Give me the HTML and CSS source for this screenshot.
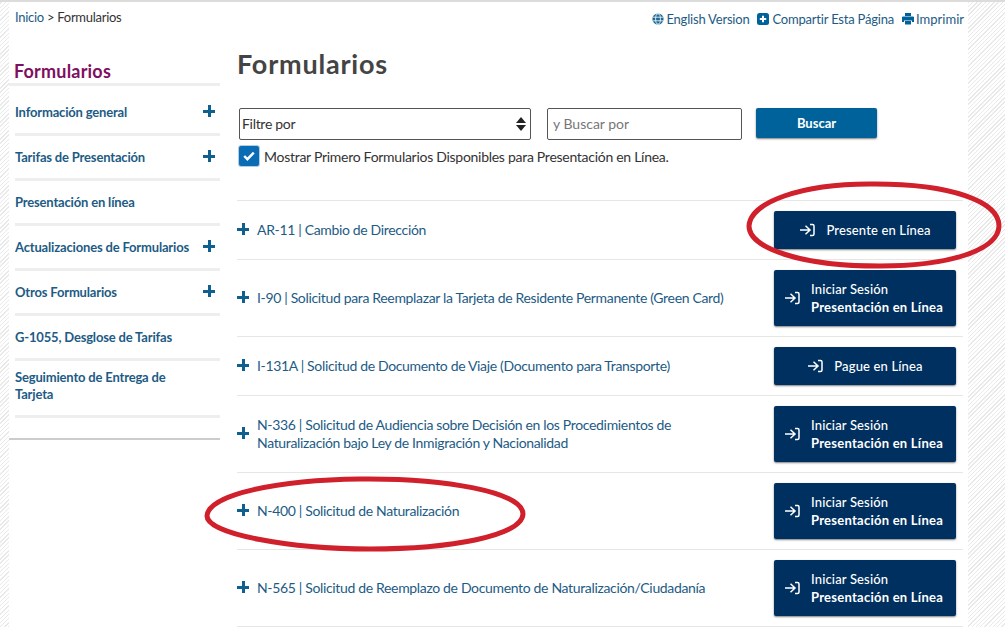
FILE: index.html
```html
<!DOCTYPE html>
<html lang="es">
<head>
  <meta charset="UTF-8" />
  <meta name="viewport" content="width=device-width, initial-scale=1.0"/>
  <title>Formularios</title>
  <link rel="stylesheet" href="styles.css">
</head>
<body>

  <div class="page">
    <div class="topbar">
      <div class="crumbs"><a href="#">Inicio</a> &gt; Formularios</div>
      <div class="tools">
        <a href="#">
          <svg class="tool-icon" viewBox="0 0 12 12"><circle cx="6" cy="6" r="5.600" fill="#1b6a97"/><ellipse cx="6" cy="6" rx="2.400" ry="5.200" fill="none" stroke="#fff" stroke-width=".8"/><path d="M1 4.200h10M1 7.800h10" stroke="#fff" stroke-width=".8"/></svg>
          English Version
        </a>
        <a class="share" href="#">
          <svg class="tool-icon" viewBox="0 0 12 12"><rect width="12" height="12" rx="2.500" fill="#00629b"/><path d="M6 2.800v6.400M2.800 6h6.400" stroke="#fff" stroke-width="2"/></svg>
          Compartir Esta Página
        </a>
        <a class="print" href="#">
          <svg class="tool-icon" viewBox="0 0 12 12"><path d="M3 0h6v3H3z" fill="#00629b"/><path d="M1 3.600h10a1 1 0 0 1 1 1V9H10V7.400H2V9H0V4.600a1 1 0 0 1 1-1z" fill="#00629b"/><path d="M3 8h6v3.500H3z" fill="#00629b"/></svg>
          Imprimir
        </a>
      </div>
    </div>

    <div class="layout">
      <aside class="sidebar">
        <h2>Formularios</h2>
        <ul>
          <li><a href="#">Información general</a><span class="plus"></span></li>
          <li><a href="#">Tarifas de Presentación</a><span class="plus"></span></li>
          <li><a href="#">Presentación en línea</a></li>
          <li><a href="#">Actualizaciones de Formularios</a><span class="plus"></span></li>
          <li><a href="#">Otros Formularios</a><span class="plus"></span></li>
          <li><a href="#">G-1055, Desglose de Tarifas</a></li>
          <li class="tall"><a href="#">Seguimiento de Entrega de Tarjeta</a></li>
        </ul>
        <div class="side-end"></div>
      </aside>

      <main class="content">
        <h1>Formularios</h1>

        <div class="filters">
          <div class="select-wrap">
            <select><option>Filtre por</option></select>
            <span class="updown"></span>
          </div>
          <input type="text" placeholder="y Buscar por">
          <button class="search-btn">Buscar</button>
        </div>

        <label class="check">
          <span class="box"><svg viewBox="0 0 12 10" width="12" height="10"><path d="M1.200 5l3.200 3.200 6.400-6.600" fill="none" stroke="#fff" stroke-width="2.400"/></svg></span>
          Mostrar Primero Formularios Disponibles para Presentación en Línea.
        </label>

        <div class="rows" id="rows"></div>
      </main>
    </div>
  </div>

  <svg class="marks" viewBox="0 0 1005 627" width="1005" height="627">
    <path d="M875 184C800 183 750 203 749 226C749 248 800 266 880 266C950 266 998 250 999 226C999 201 950 184 875 184Z"/>
    <path d="M360 479C280 480 208 494 207 516C207 534 290 549 370 549C450 549 522 536 523 514C523 492 445 478 360 479Z"/>
  </svg>

  <script>
    const rows = [
      { code: 'AR-11', name: 'Cambio de Dirección', btn: ['Presente en Línea'] },
      { code: 'I-90', name: 'Solicitud para Reemplazar la Tarjeta de Residente Permanente (Green Card)', btn: ['Iniciar Sesión', 'Presentación en Línea'] },
      { code: 'I-131A', name: 'Solicitud de Documento de Viaje (Documento para Transporte)', btn: ['Pague en Línea'] },
      { code: 'N-336', name: 'Solicitud de Audiencia sobre Decisión en los Procedimientos de Naturalización bajo Ley de Inmigración y Nacionalidad', btn: ['Iniciar Sesión', 'Presentación en Línea'] },
      { code: 'N-400', name: 'Solicitud de Naturalización', btn: ['Iniciar Sesión', 'Presentación en Línea'] },
      { code: 'N-565', name: 'Solicitud de Reemplazo de Documento de Naturalización/Ciudadanía', btn: ['Iniciar Sesión', 'Presentación en Línea'] }
    ];

    const arrow = '<svg class="arrow" viewBox="0 0 16 14" width="16" height="14"><path d="M1 7h9M6.500 2.800L11 7l-4.500 4.200M11 1.500h2.500q1.500 0 1.500 1.500v8q0 1.500-1.500 1.500H11" fill="none" stroke="#fff" stroke-width="1.500"/></svg>';

    const container = document.getElementById('rows');
    rows.forEach(row => {
      const div = document.createElement('div');
      div.className = 'row';
      let label = `<span>${row.btn[0]}</span>`;
      if (row.btn.length > 1) {
        label = `<span class="two"><span>${row.btn[0]}</span><b>${row.btn[1]}</b></span>`;
      }
      div.innerHTML = `
        <span class="plus"></span>
        <a class="row-name" href="#">${row.code} | ${row.name}</a>
        <a class="file-btn${row.btn.length > 1 ? ' double' : ''}" href="#">${arrow}${label}</a>
      `;
      container.appendChild(div);
    });
  </script>

</body>
</html>
```

FILE: styles.css
```css
html, body {
  margin: 0;
  height: 627px;
  overflow: hidden;
}
body {
  position: relative;
  font-family: "Lato", sans-serif;
  font-size: 14px;
  color: #333;
  border-top: 2px solid #dcdcdc;
  box-sizing: border-box;
  background: repeating-linear-gradient(135deg, #ffffff 0, #ffffff 2px, #e9e9e9 2px, #e9e9e9 3px);
}
a {
  color: #1d5b85;
  text-decoration: none;
}
.page {
  margin-left: 9px;
  width: 959px;
  height: 625px;
  background: #fff;
}
.topbar {
  display: flex;
  justify-content: space-between;
  padding: 8px 4px 0 6px;
  height: 27px;
}
.crumbs {
  font-size: 13px;
  line-height: 14px;
  letter-spacing: -0.28px;
}
.tools {
  display: flex;
  gap: 8px;
  font-size: 13px;
  line-height: 18px;
  letter-spacing: -0.2px;
}
.tools a {
  display: flex;
  align-items: center;
  gap: 2px;
  height: 18px;
}
.tools a.share {
  gap: 3px;
}
.tools a.print {
  letter-spacing: 0;
}
.tool-icon {
  width: 12px;
  height: 12px;
}
.layout {
  display: flex;
}
.sidebar {
  width: 211px;
  flex: none;
  margin-right: 17px;
}
.sidebar h2 {
  margin: 0;
  padding: 22px 0 0 5px;
  height: 24px;
  font-size: 18px;
  line-height: 24px;
  letter-spacing: 0.2px;
  color: #7f0f5f;
  border-bottom: 3px solid #eeeeee;
}
.sidebar ul {
  list-style: none;
  margin: 0 0 0 6px;
  padding: 0;
}
.sidebar li {
  display: flex;
  justify-content: space-between;
  align-items: center;
  height: 42px;
  padding-right: 5px;
  border-bottom: 3px solid #eeeeee;
  font-size: 13px;
  font-weight: bold;
  line-height: 17px;
  letter-spacing: -0.17px;
}
.sidebar li:first-child {
  padding-top: 5px;
}
.sidebar li.tall {
  height: 50px;
  padding-right: 35px;
  padding-bottom: 4px;
}
.side-end {
  margin-top: 20px;
  border-bottom: 2px solid #cccccc;
}
.plus {
  flex: none;
  width: 12px;
  height: 12px;
  margin-top: -2px;
  background:
    linear-gradient(#0f5f8f, #0f5f8f) center / 12px 3px no-repeat,
    linear-gradient(#0f5f8f, #0f5f8f) center / 3px 12px no-repeat;
}
.content {
  flex: 1;
  padding-right: 5px;
}
h1 {
  margin: 0;
  padding-top: 11px;
  height: 43px;
  font-size: 27px;
  line-height: 32px;
  letter-spacing: 0.8px;
  color: #444;
}
.filters {
  display: flex;
  align-items: flex-start;
  margin: 17px 0 0 2px;
}
.select-wrap {
  position: relative;
  width: 292px;
  margin-right: 16px;
}
.select-wrap select {
  appearance: none;
  width: 100%;
  height: 32px;
  padding: 0 2px 2px;
  border: 1px solid #555;
  border-radius: 2px;
  background: #fff;
  font: 14px "Lato", sans-serif;
  letter-spacing: -0.3px;
  color: #333;
}
.updown {
  position: absolute;
  right: 5px;
  top: 9px;
  width: 0;
  border-left: 5px solid transparent;
  border-right: 5px solid transparent;
  border-bottom: 6px solid #222;
}
.updown::after {
  content: "";
  position: absolute;
  left: -5px;
  top: 8px;
  border-left: 5px solid transparent;
  border-right: 5px solid transparent;
  border-top: 6px solid #222;
}
.filters input {
  box-sizing: border-box;
  width: 195px;
  height: 32px;
  padding: 0 5px 2px;
  border: 1px solid #555;
  border-radius: 2px;
  font: 14px "Lato", sans-serif;
}
.filters input::placeholder {
  color: #777;
}
.search-btn {
  width: 121px;
  height: 30px;
  margin-left: 14px;
  border: none;
  border-radius: 2px;
  background: #00629b;
  box-shadow: 0 1px 2px rgba(0,0,0,0.5);
  color: #fff;
  font: bold 13px "Lato", sans-serif;
}
.check {
  display: flex;
  align-items: center;
  gap: 4px;
  margin: 5px 0 0 1px;
  height: 22px;
  font-size: 14px;
  letter-spacing: -0.28px;
}
.box {
  display: flex;
  align-items: center;
  justify-content: center;
  width: 22px;
  height: 22px;
  box-sizing: border-box;
  border-radius: 3px;
  background: #0a6cb5;
  border: 1px solid #b5cfe2;
}
.rows {
  margin-top: 33px;
  border-top: 1px solid #e6e6e6;
}
.row {
  display: flex;
  align-items: center;
  padding: 10px 7px 10px 0;
  border-bottom: 1px solid #e6e6e6;
}
.row .plus {
  margin-right: 8px;
}
.row-name {
  flex: 1;
  padding-right: 40px;
  font-size: 14px;
  line-height: 18px;
  letter-spacing: -0.34px;
}
.file-btn {
  flex: none;
  display: flex;
  align-items: center;
  justify-content: center;
  gap: 11px;
  box-sizing: border-box;
  width: 182px;
  height: 38px;
  border-radius: 2px;
  background: #00305f;
  box-shadow: 0 1px 2px rgba(0,0,0,0.5);
  color: #fff;
  font-size: 13px;
  font-weight: 500;
  letter-spacing: 0.15px;
}
.file-btn.double {
  height: 56px;
  justify-content: flex-start;
  padding-left: 10px;
}
.file-btn b {
  letter-spacing: 0.25px;
}
.two {
  display: flex;
  flex-direction: column;
  line-height: 18px;
}
.marks {
  position: absolute;
  left: 0;
  top: -2px;
  fill: none;
  stroke: #d0202c;
  stroke-width: 5;
  pointer-events: none;
}
```
